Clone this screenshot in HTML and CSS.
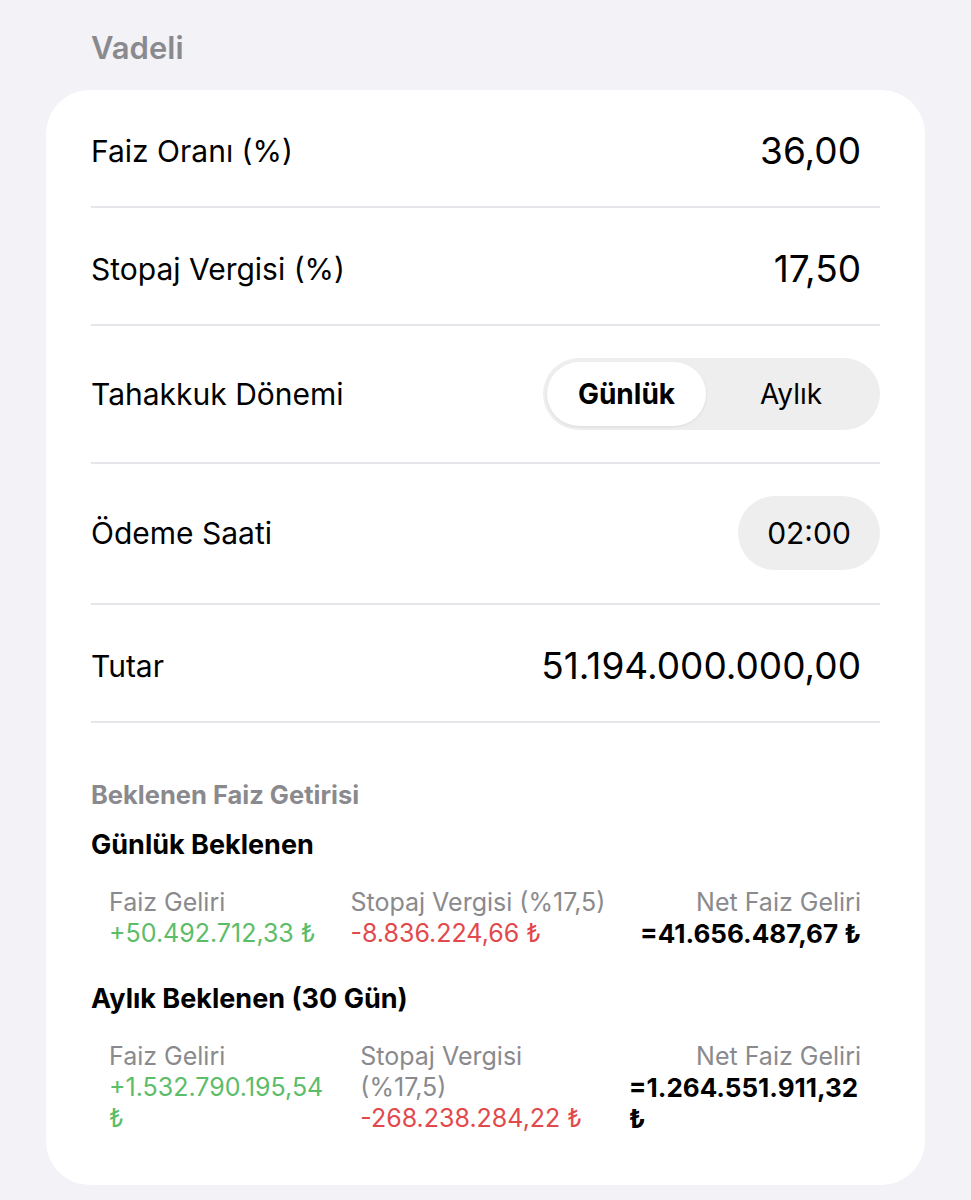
FILE: index.html
```html
<!DOCTYPE html>
<html lang="tr">

<head>
    <meta charset="UTF-8">
    <title>Vadeli</title>
    <link rel="stylesheet" href="styles.css">
</head>

<body>

    <h2 class="baslik">Vadeli</h2>

    <div class="kart">
        <div class="satir">
            <span class="etiket">Faiz Oranı (%)</span>
            <span class="deger">36,00</span>
        </div>
        <div class="satir">
            <span class="etiket">Stopaj Vergisi (%)</span>
            <span class="deger">17,50</span>
        </div>
        <div class="satir satir-kontrol">
            <span class="etiket">Tahakkuk Dönemi</span>
            <div class="secim">
                <span class="secenek secili">Günlük</span>
                <span class="secenek">Aylık</span>
            </div>
        </div>
        <div class="satir satir-kontrol">
            <span class="etiket">Ödeme Saati</span>
            <span class="saat">02:00</span>
        </div>
        <div class="satir">
            <span class="etiket">Tutar</span>
            <span class="deger">51.194.000.000,00</span>
        </div>

        <div class="ozet">
            <div class="ozet-baslik">Beklenen Faiz Getirisi</div>

            <div class="donem">Günlük Beklenen</div>
            <div class="kalemler">
                <div class="kalem">
                    <span class="kalem-ad">Faiz Geliri</span>
                    <span class="yesil">+50.492.712,33 ₺</span>
                </div>
                <div class="kalem">
                    <span class="kalem-ad">Stopaj Vergisi (%17,5)</span>
                    <span class="kirmizi">-8.836.224,66 ₺</span>
                </div>
                <div class="kalem kalem-net">
                    <span class="kalem-ad">Net Faiz Geliri</span>
                    <span class="net">=41.656.487,67 ₺</span>
                </div>
            </div>

            <div class="donem">Aylık Beklenen (30 Gün)</div>
            <div class="kalemler">
                <div class="kalem">
                    <span class="kalem-ad">Faiz Geliri</span>
                    <span class="yesil">+1.532.790.195,54 ₺</span>
                </div>
                <div class="kalem">
                    <span class="kalem-ad">Stopaj Vergisi (%17,5)</span>
                    <span class="kirmizi">-268.238.284,22 ₺</span>
                </div>
                <div class="kalem kalem-net">
                    <span class="kalem-ad">Net Faiz Geliri</span>
                    <span class="net">=1.264.551.911,32 ₺</span>
                </div>
            </div>
        </div>
    </div>

</body>

</html>
```

FILE: styles.css
```css
body {
    font-family: Inter, Roboto, "Liberation Sans", sans-serif;
    margin: 0;
    padding: 0 46px 16px;
    background: #f2f2f7;
    color: #000;
}

.baslik {
    margin: 0;
    padding: 30px 45px 24px;
    font-size: 31px;
    line-height: 36px;
    font-weight: 600;
    color: #8a8a8e;
}

.kart {
    background: #fff;
    border-radius: 44px;
    padding: 0 45px 17px;
}

.satir {
    display: flex;
    justify-content: space-between;
    align-items: center;
    padding: 42px 19px 36px 0;
    border-bottom: 2px solid #e6e6ea;
}

.satir-kontrol {
    padding: 32px 0 32px 0;
}

.satir-kontrol + .satir-kontrol {
    padding-bottom: 33px;
}

.etiket {
    font-size: 30px;
    line-height: 36px;
}

.deger {
    font-size: 37px;
    line-height: 38px;
}

.secim {
    display: flex;
    width: 337px;
    height: 72px;
    box-sizing: border-box;
    padding: 4px;
    border-radius: 36px;
    background: #eeeeef;
}

.secenek {
    flex: 1;
    display: flex;
    align-items: center;
    justify-content: center;
    font-size: 28px;
    border-radius: 32px;
}

.secili {
    flex: 0 0 159px;
    background: #fff;
    font-weight: 700;
    box-shadow: 0 1px 3px rgba(0, 0, 0, 0.08);
}

.saat {
    display: flex;
    align-items: center;
    justify-content: center;
    width: 142px;
    height: 74px;
    border-radius: 37px;
    background: #eeeeef;
    font-size: 30px;
}

.ozet {
    padding-top: 57px;
}

.ozet-baslik {
    font-size: 25.5px;
    line-height: 30px;
    font-weight: 700;
    color: #8a8a8e;
}

.donem {
    margin-top: 19px;
    font-size: 27px;
    line-height: 32px;
    font-weight: 700;
}

.kalemler {
    display: flex;
    justify-content: space-between;
    gap: 34px;
    padding: 26px 19px 0 18px;
    margin-bottom: 34px;
}

.kalem {
    display: flex;
    flex-direction: column;
    font-size: 25px;
    line-height: 31px;
}

.kalem-ad {
    color: #8a8a8e;
}

.kalem-net {
    align-items: flex-end;
}

.yesil {
    color: #5cbd69;
}

.kirmizi {
    color: #e2494d;
}

.net {
    font-size: 26px;
    font-weight: 700;
    text-align: left;
}
```
